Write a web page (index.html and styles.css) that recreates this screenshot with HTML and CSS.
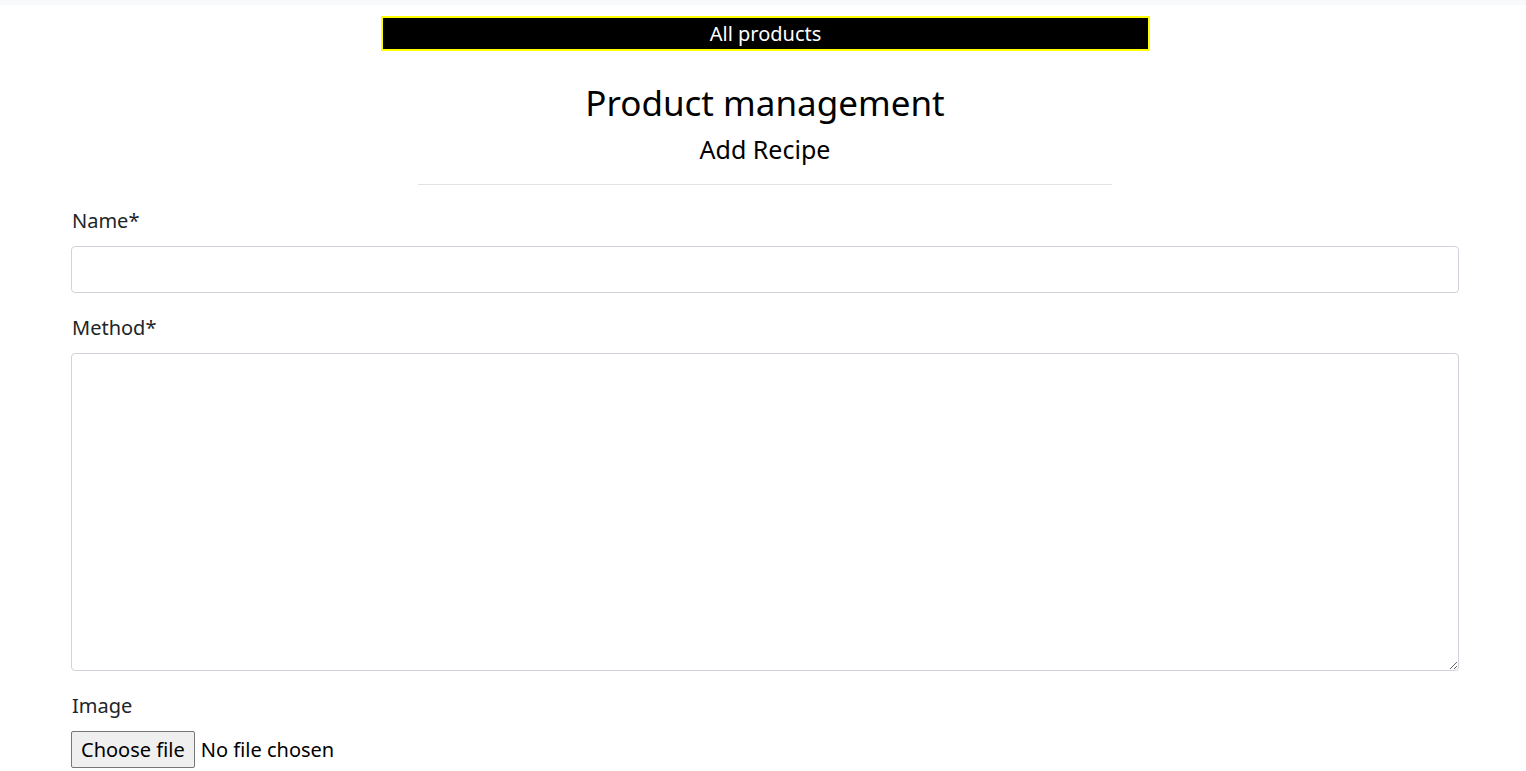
FILE: index.html
```html
<!DOCTYPE html>
<html lang="en">
<head>
<meta charset="utf-8">
<title>Product management</title>
<link rel="stylesheet" href="styles.css">
</head>
<body>
<div class="topstrip"></div>
<nav class="banner"><a class="banner-link" href="#">All products</a></nav>
<header class="heading">
  <h1 class="title">Product management</h1>
  <h2 class="subtitle">Add Recipe</h2>
  <hr class="rule">
</header>
<form class="form">
  <div class="field">
    <label class="label" for="name">Name*</label>
    <input class="control" id="name" type="text">
  </div>
  <div class="field">
    <label class="label" for="method">Method*</label>
    <textarea class="control area" id="method"></textarea>
  </div>
  <div class="field">
    <span class="label">Image</span>
    <div class="file-row">
      <label class="file-btn" for="image">Choose file</label>
      <span class="file-name">No file chosen</span>
      <input class="file-input" id="image" type="file">
    </div>
  </div>
</form>
</body>
</html>
```
FILE: styles.css
```css
html, body {
  margin: 0;
  padding: 0;
  background: #fff;
  font-family: "Noto Sans", "Open Sans", sans-serif;
  color: #212529;
}
.topstrip {
  height: 5px;
  background: #f8f9fa;
}
.banner {
  box-sizing: border-box;
  width: 769px;
  height: 35px;
  margin: 11px 0 0 381px;
  background: #000;
  border: 2px solid #ffff00;
  display: flex;
  align-items: center;
  justify-content: center;
}
.banner-link {
  color: #fff;
  text-decoration: none;
  font-size: 20px;
  line-height: 1;
}
.heading {
  display: flex;
  flex-direction: column;
  align-items: center;
  padding-left: 4px;
  margin-top: 31px;
}
.title {
  margin: 0;
  font-size: 35px;
  font-weight: 400;
  line-height: 1.2;
  color: #000;
}
.subtitle {
  margin: 10px 0 0;
  font-size: 25px;
  font-weight: 400;
  line-height: 1.2;
  color: #000;
}
.rule {
  width: 694px;
  margin: 20px 0 0;
  border: 0;
  border-top: 1px solid #e3e3e3;
}
.form {
  margin: 21px 67px 0 71px;
  display: flex;
  flex-direction: column;
  gap: 20px;
}
.field {
  display: flex;
  flex-direction: column;
  align-items: flex-start;
}
.label {
  font-size: 20px;
  line-height: 1.5;
  margin: 0 0 10px 1px;
}
.control {
  box-sizing: border-box;
  width: 100%;
  height: 47px;
  border: 1px solid #ced4da;
  border-radius: 4px;
  font-family: inherit;
  font-size: 20px;
  padding: 6px 12px;
  background: #fff;
}
.area {
  height: 318px;
  resize: vertical;
}
.file-row {
  display: flex;
  align-items: center;
  gap: 6px;
}
.file-btn {
  box-sizing: border-box;
  height: 37px;
  display: flex;
  align-items: center;
  padding: 0 9px;
  border: 1px solid #767676;
  border-radius: 2px;
  background: #efefef;
  color: #000;
  font-size: 20px;
}
.file-name {
  font-size: 20px;
  color: #000;
}
.file-input {
  display: none;
}
```
